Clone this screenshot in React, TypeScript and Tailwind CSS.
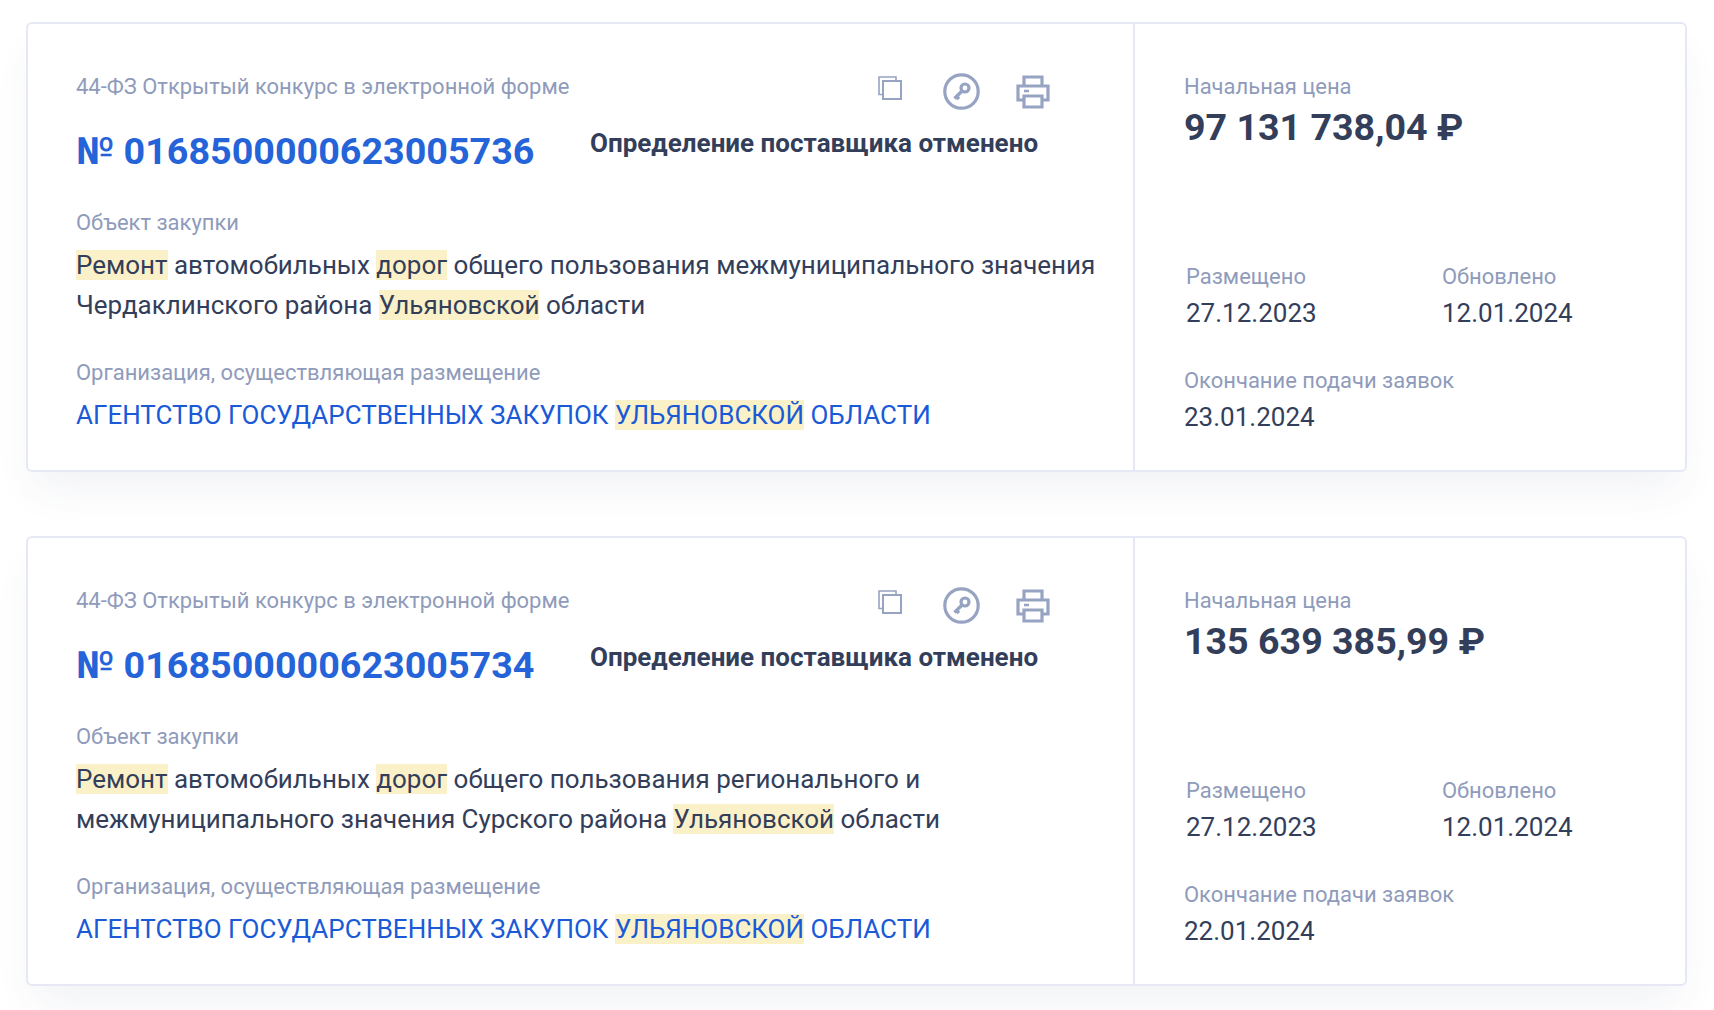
const M = ({ children }: { children: React.ReactNode }) => (
  <span className="bg-[#fbf1c8]">{children}</span>
);

const Label = ({ children, cls = "" }: { children: React.ReactNode; cls?: string }) => (
  <div className={`text-[21.98px] leading-[24px] text-[#8f9bbb] ${cls}`}>{children}</div>
);

const Icons = () => (
  <div className="absolute left-[850px] top-[49px] flex items-center text-[#97a3c2]">
    <svg className="mt-[-8px]" width="24" height="24" viewBox="0 0 24 24" fill="none" stroke="currentColor">
      <path d="M5 18.5H1V1h17v4" strokeWidth="1.6" />
      <rect x="5" y="5" width="18" height="18" strokeWidth="2" />
    </svg>
    <svg className="ml-[41px]" width="37" height="37" viewBox="0 0 37 37" fill="none">
      <circle cx="18.5" cy="18.5" r="16.7" stroke="currentColor" strokeWidth="3.2" />
      <circle cx="22" cy="15" r="4" stroke="currentColor" strokeWidth="3.2" />
      <path d="M19 18L11.5 25.5M13.5 23.5l2.5 2.5" stroke="currentColor" strokeWidth="3.4" />
    </svg>
    <svg className="ml-[36px]" width="34" height="34" viewBox="0 0 34 34" fill="none" stroke="currentColor" strokeWidth="3.2">
      <path d="M8 11V2h18v9" />
      <path d="M8 25H2V11h30v14h-6" />
      <path d="M8 21h18v11H8z" />
      <path d="M8 16h5" strokeWidth="2.5" />
    </svg>
  </div>
);

const Card = ({
  no,
  price,
  end,
  subject,
}: {
  no: string;
  price: string;
  end: string;
  subject: React.ReactNode;
}) => (
  <div className="relative flex h-[450px] rounded-[6px] border-2 border-[#e6e8f5] bg-white shadow-[0_24px_40px_-8px_rgba(60,70,120,0.07)]">
    <div className="w-[1107px] shrink-0 border-r-2 border-[#e6e8f5] pl-[48px] pt-[51px]">
      <Label>44-ФЗ Открытый конкурс в электронной форме</Label>
      <div className="relative mt-[26px] h-[52px]">
        <div className="text-[37.7px] leading-[52px] font-bold text-[#2563d9]">№ {no}</div>
        <div className="absolute left-[514px] top-[3px] text-[26.03px] leading-[30px] font-bold text-[#333e5a]">
          Определение поставщика отменено
        </div>
      </div>
      <Label cls="mt-[34px]">Объект закупки</Label>
      <div className="mt-[10px] w-[1040px] text-[25.97px] leading-[40px] text-[#333e5a]">{subject}</div>
      <Label cls="mt-[36px]">Организация, осуществляющая размещение</Label>
      <div className="mt-[14px] text-[25.97px] leading-[32px] text-[#1a5ad7]">
        АГЕНТСТВО ГОСУДАРСТВЕННЫХ ЗАКУПОК <M>УЛЬЯНОВСКОЙ</M> ОБЛАСТИ
      </div>
    </div>
    <div className="flex-1 pl-[49px] pt-[51px]">
      <Label>Начальная цена</Label>
      <div className="mt-[6px] text-[37.6px] leading-[44px] font-bold text-[#333e5a]">{price}</div>
      <div className="mt-[116px] ml-[2px] grid grid-cols-[256px_1fr]">
        <div>
          <Label>Размещено</Label>
          <div className="mt-[8px] text-[26px] leading-[32px] text-[#333e5a]">27.12.2023</div>
        </div>
        <div>
          <Label>Обновлено</Label>
          <div className="mt-[8px] text-[26px] leading-[32px] text-[#333e5a]">12.01.2024</div>
        </div>
      </div>
      <Label cls="mt-[40px]">Окончание подачи заявок</Label>
      <div className="mt-[8px] text-[26px] leading-[32px] text-[#333e5a]">{end}</div>
    </div>
    <Icons />
  </div>
);

export default function App() {
  return (
    <div className="h-[1010px] w-[1714px] overflow-hidden bg-white pl-[26px] pr-[27px] pt-[22px] font-['Roboto',sans-serif]">
      <div className="flex flex-col gap-[64px]">
        <Card
          no="0168500000623005736"
          price="97 131 738,04 ₽"
          end="23.01.2024"
          subject={
            <>
              <M>Ремонт</M> автомобильных <M>дорог</M> общего пользования межмуниципального значения Чердаклинского района <M>Ульяновской</M> области
            </>
          }
        />
        <Card
          no="0168500000623005734"
          price="135 639 385,99 ₽"
          end="22.01.2024"
          subject={
            <>
              <M>Ремонт</M> автомобильных <M>дорог</M> общего пользования регионального и межмуниципального значения Сурского района <M>Ульяновской</M> области
            </>
          }
        />
      </div>
    </div>
  );
}
